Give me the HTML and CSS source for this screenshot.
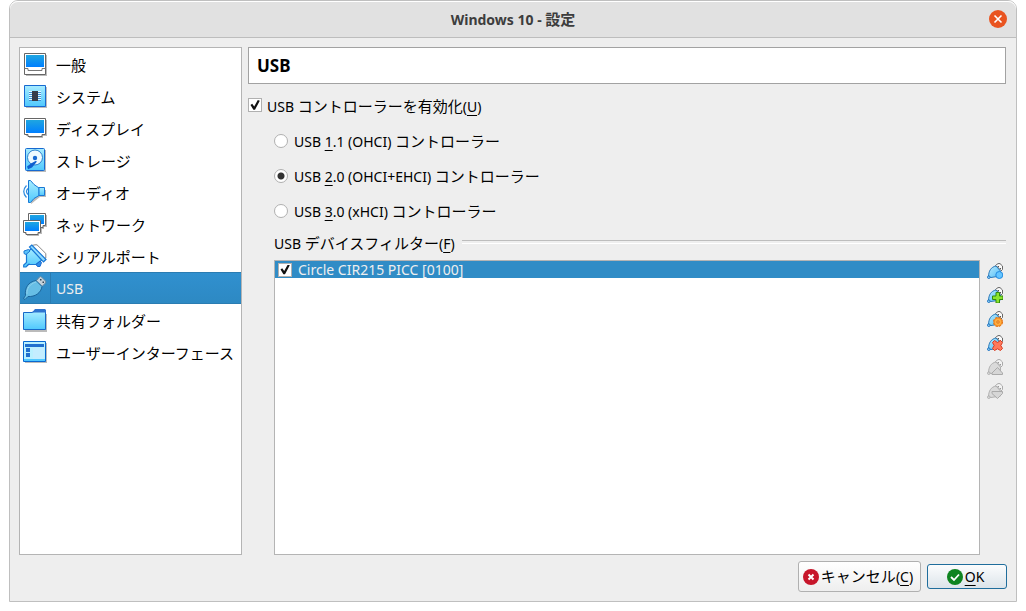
FILE: index.html
```html
<!DOCTYPE html>
<html lang="ja">
<head>
<meta charset="utf-8">
<title>Windows 10 - 設定</title>
<link rel="stylesheet" href="styles.css">
</head>
<body>
<svg class="defs" aria-hidden="true">
  <defs>
    <linearGradient id="screen" x1="0" y1="0" x2="0" y2="1"><stop offset="0" stop-color="#1fa6e0"/><stop offset="1" stop-color="#007fff"/></linearGradient>
    <linearGradient id="sky" x1="0" y1="0" x2="0" y2="1"><stop offset="0" stop-color="#a8ecff"/><stop offset="1" stop-color="#4fc8fd"/></linearGradient>
    <linearGradient id="plug" x1="0" y1="0" x2="1" y2="1"><stop offset="0" stop-color="#b5eaff"/><stop offset="1" stop-color="#55bdf5"/></linearGradient>
    <symbol id="usb-blue" viewBox="0 0 16 16">
      <path d="M8.500 2.500 11 .6H13L15.500 3V6.500L13.500 8.500Z" fill="#fafafa" stroke="#666"/>
      <path d="M10.500 3H12v1.500h-1.500zM12.500 5H14v1.500h-1.500z" fill="#555"/>
      <path d="M1.500 14C1.500 8 4 4 9 3L13.500 8V13L4 14.500Z" fill="url(#plug)" stroke="#2a78b8"/>
      <circle cx="1.800" cy="14.200" r="1.300" fill="#9adcf8" stroke="#1c6fc0"/>
    </symbol>
    <symbol id="usb-gray" viewBox="0 0 16 16">
      <path d="M8.500 2.500 11 .6H13L15.500 3V6.500L13.500 8.500Z" fill="#f2f2f2" stroke="#aaa"/>
      <path d="M10.500 3H12v1.500h-1.500zM12.500 5H14v1.500h-1.500z" fill="#999"/>
      <path d="M1.500 14C1.500 8 4 4 9 3L13.500 8V13L4 14.500Z" fill="#dadada" stroke="#b0b0b0"/>
      <circle cx="1.800" cy="14.200" r="1.300" fill="#ddd" stroke="#b0b0b0"/>
    </symbol>
  </defs>
</svg>
<main class="window">
  <header class="titlebar">
    <h1 class="title"><span class="title-latin">Windows 10 - </span>設定</h1>
    <button class="close" type="button" aria-label="閉じる"><svg viewBox="0 0 18 18"><path d="M5.500 5.500l7 7m0-7l-7 7" stroke="#fff" stroke-width="1.600"/></svg></button>
  </header>
  <div class="content">
    <nav class="sidebar">
      <a class="item" href="#general"><svg class="icon" viewBox="0 0 24 24"><path d="M3 3h21v21H3z" fill="#bbb"/><path d="M1.500 1.500h21v21h-21z" fill="#fff" stroke="#666"/><path d="M3 3h18v12H3z" fill="url(#screen)"/><path d="M1.500 16.500H5v2h14v-2h3.500" fill="none" stroke="#777"/></svg><span>一般</span></a>
      <a class="item" href="#system"><svg class="icon" viewBox="0 0 24 24"><path d="M3 3h21v21H3z" fill="#bbb"/><path d="M1.500 1.500h21v21h-21z" fill="url(#sky)" stroke="#1769d0"/><path d="M6 7.500h12M6 9.500h12M6 11.500h12M6 13.500h12M6 15.500h12" stroke="#e4fbff"/><path d="M6 8.500h12M6 10.500h12M6 12.500h12M6 14.500h12M6 16.500h12" stroke="#3f8fd6"/><path d="M9 7h6v10H9z" fill="#373c4a"/></svg><span>システム</span></a>
      <a class="item" href="#display"><svg class="icon" viewBox="0 0 24 24"><path d="M3 4h21v16h-4v2H6v-2H3z" fill="#bbb"/><path d="M1.500 2.500h21v16H19v2H5v-2H1.500z" fill="#fff" stroke="#666"/><path d="M3 4h18v13H3z" fill="url(#screen)"/></svg><span>ディスプレイ</span></a>
      <a class="item" href="#storage"><svg class="icon" viewBox="0 0 24 24"><path d="M4 2h19v22H4z" fill="#bbb"/><rect x="2.500" y=".5" width="19" height="22" rx="1" fill="url(#sky)" stroke="#1769d0"/><circle cx="12" cy="9.500" r="7.500" fill="#eefaff" stroke="#2c80cc"/><circle cx="12" cy="10" r="2.200" fill="#1769d0"/><path d="M14 13.500 9 19.500 5 21.300 4 18.500 8 15.500 12.500 13Z" fill="#0d5fd0"/></svg><span>ストレージ</span></a>
      <a class="item" href="#audio"><svg class="icon" viewBox="0 0 24 24"><path d="M7 2l10 8h6v7h-6L8 24Z" fill="#bbb"/><path d="M5.500.5H7.500L11 4.500 16 8V15.500L11 18.500 7.500 22.500H5.500Z" fill="url(#sky)" stroke="#1978d5"/><path d="M16 7.500h5.500v8H16z" fill="url(#sky)" stroke="#1978d5"/><path d="M3.500 5.500Q-2 11.500 3.500 17.500M5 8.500Q2 11.500 5 14.500" fill="none" stroke="#2f8cdf" stroke-width="1.200"/></svg><span>オーディオ</span></a>
      <a class="item" href="#network"><svg class="icon" viewBox="0 0 24 24"><path d="M7 3h17v12h-3v2H9M2 10h17v12h-3v2H4v-2H2z" fill="#bbb"/><path d="M5.500 1.500h17v12H20v2H8v-2H5.500z" fill="#fff" stroke="#666"/><path d="M7 3h14v9H7z" fill="url(#screen)"/><path d="M.5 8.500h17v12H15v2H3v-2H.5z" fill="#fff" stroke="#666"/><path d="M2 10h14v9H2z" fill="url(#screen)"/></svg><span>ネットワーク</span></a>
      <a class="item" href="#serial"><svg class="icon" viewBox="0 0 24 24"><path d="M9 1.500 12 .8H14L22.800 9.500V14L21 15" fill="#fff" stroke="#888"/><path d="M8.500 4.500 3.500 9V18.500L.7 21V23H3L5.500 20.500H13L19 16Z" fill="url(#sky)" stroke="#1978d5" stroke-width="1.200"/><path d="M1 7 5.500 5.500 7 7 3 10.500 1 9.500Z" fill="#5dc4fa" stroke="#1978d5"/><path d="M13 20.500 17 17 18.500 18.500 17 22.500H14.500Z" fill="#2c8cea" stroke="#1769d0"/><path d="M6.500 3 8.800 1 23 15.500 20.500 17.800Z" fill="#90dcff" stroke="#1978d5" stroke-width="1.200"/><path d="M4 22 6 19.500" stroke="#1769d0"/></svg><span>シリアルポート</span></a>
      <a class="item selected" href="#usb" aria-current="page"><svg class="icon" viewBox="0 0 24 24"><path d="M13 5 16.500 1Q17.500 0 18.500 1L22.500 5Q23.300 6 22.500 7L19 10.500Z" fill="#c5d2db" stroke="#66889f"/><path d="M17 3h1.500v1.500H17zM19.500 5.500H21V7h-1.500z" fill="#345"/><path d="M2.500 19.500C1.500 12 5 6 13 4.500L19 10.500C18 17 12 21 5 20.500L2 23.500.5 22.500Z" fill="#67bee5" stroke="#1b659b"/><path d="M4 18C3.500 12 7 8 13 6" fill="none" stroke="#8ed1ed"/></svg><span class="latin">USB</span></a>
      <a class="item" href="#folders"><svg class="icon" viewBox="0 0 24 24"><path d="M2 6h22v18H2z" fill="#bbb"/><path d="M.5 4.500H9L11 3.500H22.500V21.500H.5Z" fill="url(#sky)" stroke="#1769c8"/><path d="M9 4.500 12 1H22L23 2V4.500Z" fill="#2e73cf"/></svg><span>共有フォルダー</span></a>
      <a class="item" href="#interface"><svg class="icon" viewBox="0 0 24 24"><path d="M2 3h22v20H2z" fill="#bbb"/><path d="M.5 1.500h22v20H.5z" fill="#b9f0ff" stroke="#0968d0"/><path d="M1 19h21v2H1z" fill="#50c8ff"/><path d="M2 4h19v3H2zM3 8h4v4H3zM3 13h4v4H3z" fill="#216fce"/><path d="M10 8h11v11H10z" fill="#c4edff"/></svg><span>ユーザーインターフェース</span></a>
    </nav>
    <section class="page">
      <h2 class="heading">USB</h2>
      <div class="check-row"><input class="check" type="checkbox" id="enable" checked><label for="enable"><span class="latin">USB </span>コントローラーを有効化<span class="latin">(<u>U</u>)</span></label></div>
      <div class="group">
        <div class="radio-row"><input class="radio" type="radio" name="ctl" id="u1"><label for="u1"><span class="latin">USB <u>1</u>.1 (OHCI) </span>コントローラー</label></div>
        <div class="radio-row"><input class="radio" type="radio" name="ctl" id="u2" checked><label for="u2"><span class="latin">USB <u>2</u>.0 (OHCI+EHCI) </span>コントローラー</label></div>
        <div class="radio-row"><input class="radio" type="radio" name="ctl" id="u3"><label for="u3"><span class="latin">USB <u>3</u>.0 (xHCI) </span>コントローラー</label></div>
        <h3 class="filters-title"><span><span class="latin">USB </span>デバイスフィルター<span class="latin">(<u>F</u>)</span></span></h3>
        <div class="filters">
          <div class="filter-list">
            <div class="filter"><input class="check" type="checkbox" id="f1" checked><label class="latin" for="f1">Circle CIR215 PICC [0100]</label></div>
          </div>
          <div class="tools">
            <button type="button" class="tool" aria-label="空のフィルターを追加"><svg viewBox="0 0 16 16"><use href="#usb-blue"/><circle cx="12.300" cy="12" r="3.500" fill="#65c5ff" stroke="#228be0"/></svg></button>
            <button type="button" class="tool" aria-label="デバイスからフィルターを追加"><svg viewBox="0 0 16 16"><use href="#usb-blue"/><path d="M9 5.500h3.500v3.500H16v3.500h-3.500V16H9v-3.500H5.500V9H9z" fill="#8be52d" stroke="#328b0a"/></svg></button>
            <button type="button" class="tool" aria-label="フィルターを編集"><svg viewBox="0 0 16 16"><use href="#usb-blue"/><circle cx="11" cy="11" r="4.200" fill="#ffae42" stroke="#e36b0b" stroke-width="1.600" stroke-dasharray="2.300 1"/><circle cx="11" cy="11" r="3.900" fill="#ffae42" stroke="#ed8118" stroke-width=".7"/><circle cx="11" cy="11" r="1.200" fill="#ffd38b" stroke="#df6d0b"/></svg></button>
            <button type="button" class="tool" aria-label="フィルターを削除"><svg viewBox="0 0 16 16"><use href="#usb-blue"/><path d="M5.500 7.500 7.500 5.500 10.500 7.500 13.500 5.500 15.500 7.500 13.800 10.500 15.500 13.500 13.500 15.500 10.500 13.800 7.500 15.500 5.500 13.500 7.200 10.500Z" fill="#ff7a5c" stroke="#d93a22"/></svg></button>
            <button type="button" class="tool" aria-label="上へ移動" disabled><svg viewBox="0 0 16 16"><use href="#usb-gray"/><path d="M5 15.500V14L10.500 8.500 15.500 14V15.500Z" fill="#d6d6d6" stroke="#aaa"/></svg></button>
            <button type="button" class="tool" aria-label="下へ移動" disabled><svg viewBox="0 0 16 16"><use href="#usb-gray"/><path d="M5 8.500H15.500V10.500L10.500 15.500 5 10.500Z" fill="#d6d6d6" stroke="#aaa"/></svg></button>
          </div>
        </div>
      </div>
    </section>
  </div>
  <footer class="actions">
    <button type="button" class="button cancel"><svg viewBox="0 0 16 16"><circle cx="8" cy="8" r="8" fill="#c7162b"/><path d="M5.500 5.500l5 5m0-5l-5 5" stroke="#fff" stroke-width="2"/></svg><span>キャンセル<span class="latin">(<u>C</u>)</span></span></button>
    <button type="button" class="button ok"><svg viewBox="0 0 16 16"><circle cx="8" cy="8" r="8" fill="#0e8420"/><path d="M4 8l3 3 5-5.500" fill="none" stroke="#fff" stroke-width="1.800"/></svg><span class="latin"><u>O</u>K</span></button>
  </footer>
</main>
</body>
</html>
```
FILE: styles.css
```css
* { box-sizing: border-box; }
body {
  margin: 0;
  background: #fff;
  color: #000;
  font: 15px/20px "Noto Sans CJK JP", sans-serif;
}
button { font: inherit; color: inherit; }
h1, h2, h3 { margin: 0; font: inherit; }
.defs { position: absolute; width: 0; height: 0; }
.latin { font-family: "Noto Sans", sans-serif; font-size: 14px; }
u { text-underline-offset: 3px; text-decoration-thickness: 1px; }
.window {
  display: flex;
  flex-direction: column;
  height: calc(100vh - 9px);
  margin: 0 9px 9px;
  background: #eee;
  border: 1px solid #bfbfbf;
  border-radius: 9px 9px 0 0;
}
.titlebar {
  display: grid;
  grid-template-columns: 18px 1fr 18px;
  align-items: center;
  height: 37px;
  padding: 0 9px;
  background: #e1e1e1;
  border-bottom: 1px solid #bdbdbd;
  border-radius: 8px 8px 0 0;
  box-shadow: inset 0 1px #fff;
}
.title {
  grid-column: 2;
  text-align: center;
  color: #3d3d3d;
  font-weight: 700;
  font-size: 15px;
}
.title-latin { font-family: "Noto Sans", sans-serif; font-size: 14px; white-space: pre; }
.close {
  display: grid;
  width: 18px;
  height: 18px;
  padding: 0;
  border: 0;
  border-radius: 50%;
  background: #e95420;
}
.close svg { width: 18px; height: 18px; }
.content {
  display: flex;
  flex: 1;
  gap: 6px;
  min-height: 0;
  padding: 9px 10px 0 9px;
}
.sidebar {
  flex: none;
  width: 223px;
  background: #fff;
  border: 1px solid #b4b4b4;
}
.item {
  display: flex;
  align-items: center;
  gap: 9px;
  height: 32px;
  padding: 0 3px;
  color: #000;
  text-decoration: none;
  white-space: nowrap;
}
.item span { padding-top: 2px; }
.icon { flex: none; width: 24px; height: 24px; }
.selected {
  background: linear-gradient(90deg, transparent 30px, #2a7cb2 30px, #2a7cb2 31px, transparent 31px), linear-gradient(#3090cf, #2d89c3);
  border: solid #2a7cb2;
  border-width: 1px 0;
  color: #eee;
}
.page { display: flex; flex: 1; flex-direction: column; min-width: 0; }
.heading {
  height: 37px;
  padding: 0 8px;
  background: #fff;
  border: 1px solid #a2a2a2;
  font: 700 17px/36px "Noto Sans", sans-serif;
}
.check-row, .radio-row, .filter { display: flex; align-items: center; }
.check-row { gap: 5px; height: 42px; }
.check-row label { padding-top: 2px; }
.check, .radio { flex: none; margin: 0; appearance: none; background: #fff; border: 1px solid #b0b0b0; }
.check { width: 14px; height: 14px; }
.check:checked {
  display: grid;
  place-items: center;
}
.check:checked::before {
  content: "";
  width: 10px;
  height: 10px;
  background: #111;
  clip-path: polygon(5% 50%, 22% 38%, 42% 65%, 78% 0, 98% 8%, 50% 98%, 34% 98%);
}
.group { display: flex; flex: 1; flex-direction: column; min-height: 0; padding-left: 26px; }
.radio-row { gap: 6px; height: 35px; padding-bottom: 6px; }
.radio-row label { padding-top: 1px; }
.radio { width: 14px; height: 14px; border-radius: 50%; }
.radio:checked { background: radial-gradient(circle, #333 3px, #fff 4px); }
.filters-title { display: flex; align-items: center; gap: 7px; height: 29px; padding-bottom: 4px; }
.filters-title::after { content: ""; flex: 1; height: 2px; margin-bottom: 4px; border-top: 1px solid #bdbdbd; border-bottom: 1px solid #fff; }
.filters { display: flex; flex: 1; gap: 7px; min-height: 0; }
.filter-list { flex: 1; background: #fff; border: 1px solid #b4b4b4; }
.filter { gap: 6px; height: 17px; padding-left: 3px; background: #308cc6; color: #eee; }
.tools { display: flex; flex: none; flex-direction: column; gap: 8px; width: 19px; padding-top: 3px; }
.tool { display: grid; width: 16px; height: 16px; padding: 0; border: 0; background: none; }
.tool svg { width: 16px; height: 16px; }
.actions { display: flex; align-items: center; justify-content: flex-end; gap: 6px; height: 46px; padding: 0 9px 3px 0; }
.button {
  display: flex;
  align-items: center;
  justify-content: center;
  gap: 2px;
  padding: 0 6px 0 3px;
  border: 1px solid #b0b0b0;
  border-radius: 3px;
  background: linear-gradient(#fff, #eee);
  white-space: nowrap;
}
.button svg { width: 16px; height: 16px; }
.cancel { min-width: 123px; height: 31px; }
.ok { width: 80px; height: 25px; border-color: #1f6d9c; background: linear-gradient(#fbfcfd, #dce4ea); }
```
